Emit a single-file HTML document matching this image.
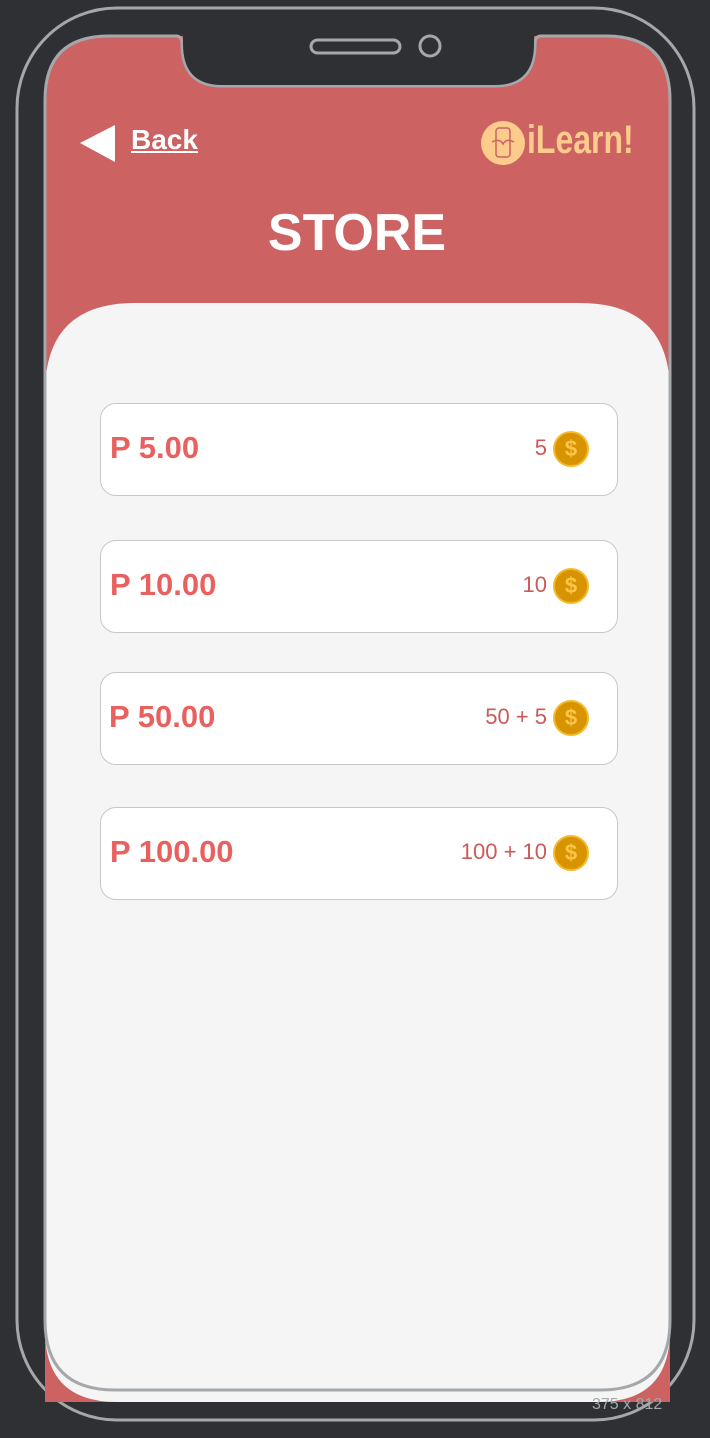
<!DOCTYPE html>
<html><head><style>
body{margin:0;width:710px;height:1438px;background:#2f3034;position:relative;overflow:hidden;font-family:"Liberation Sans",sans-serif}
.a{position:absolute}
.card{position:absolute;left:100px;width:516px;height:91px;background:#fff;border:1.5px solid #c8c8c8;border-radius:16px}
.price{position:absolute;left:9px;top:26px;font-weight:bold;font-size:31px;color:#e8615f}
.amt{position:absolute;right:70px;top:31px;font-size:22px;color:#cc5a5a}
.coin{position:absolute;right:28px;top:27px;width:32px;height:32px;border-radius:50%;background:#d89400;border:2px solid #f6b92a;color:#fcc54a;font-weight:bold;font-size:22px;text-align:center;line-height:32px}
</style></head><body>
<svg class="a" style="left:0;top:0" width="710" height="1438">
<defs><clipPath id="sc"><path d="M45 1402 L45 100 Q45 36 109 36 L606 36 Q670 36 670 100 L670 1402 Z"/></clipPath></defs>
<rect x="17" y="8" width="677" height="1412" rx="100" fill="none" stroke="#a5a8ab" stroke-width="3"/>
<g clip-path="url(#sc)">
<rect x="45" y="36" width="626" height="1366" fill="#cc6262"/>
<path d="M45 1330 L45 393 Q45 303 135 303 L580 303 Q670 303 670 393 L670 1330 Q670 1402 598 1402 L117 1402 Q45 1402 45 1330 Z" fill="#f5f5f5"/>
</g>
<path d="M45 1320 L45 100 Q45 36 109 36 L176 36 Q182 36 182 44 Q182 86 222 86 L495 86 Q535 86 535 44 Q535 36 541 36 L606 36 Q670 36 670 100 L670 1320 Q670 1390 600 1390 L115 1390 Q45 1390 45 1320 Z" fill="none" stroke="#a5a8ab" stroke-width="3"/>
<path d="M183 30 L183 44 Q183 85 222 85 L495 85 Q534 85 534 44 L534 30 Z" fill="#2f3034"/>
<rect x="311" y="40" width="89" height="13" rx="6.5" fill="none" stroke="#a5a8ab" stroke-width="3"/>
<circle cx="430" cy="46" r="10" fill="none" stroke="#a5a8ab" stroke-width="3"/>
<polygon points="80,143 115,125 115,162" fill="#fff"/>
<circle cx="503" cy="143" r="22" fill="#fdcb8b"/>
<rect x="496" y="128" width="14" height="29" rx="3" fill="none" stroke="#cc6262" stroke-width="1.5"/>
<path d="M492 142 Q500 138 503 144 Q506 138 514 142" fill="none" stroke="#cc6262" stroke-width="1.5"/>
</svg>
<div class="a" style="left:131px;top:124px;font-size:28px;font-weight:bold;color:#fff;text-decoration:underline">Back</div>
<div class="a" style="left:527px;top:118px;font-size:40px;font-weight:bold;color:#fdcb8b;font-family:'Liberation Sans Narrow','Liberation Sans',sans-serif;transform:scaleX(0.8);transform-origin:left">iLearn!</div>
<div class="a" style="left:0;width:714px;top:203px;text-align:center;font-size:52px;font-weight:bold;color:#fff">STORE</div>
<div class="card" style="top:403px"><div class="price">P 5.00</div><div class="amt">5</div><div class="coin">$</div></div>
<div class="card" style="top:540px"><div class="price">P 10.00</div><div class="amt">10</div><div class="coin">$</div></div>
<div class="card" style="top:672px"><div class="price" style="left:8px">P 50.00</div><div class="amt">50 + 5</div><div class="coin">$</div></div>
<div class="card" style="top:807px"><div class="price">P 100.00</div><div class="amt">100 + 10</div><div class="coin">$</div></div>
<div class="a" style="left:592px;top:1396px;font-size:16px;color:#a5a8ab">375 x 812</div>
</body></html>
